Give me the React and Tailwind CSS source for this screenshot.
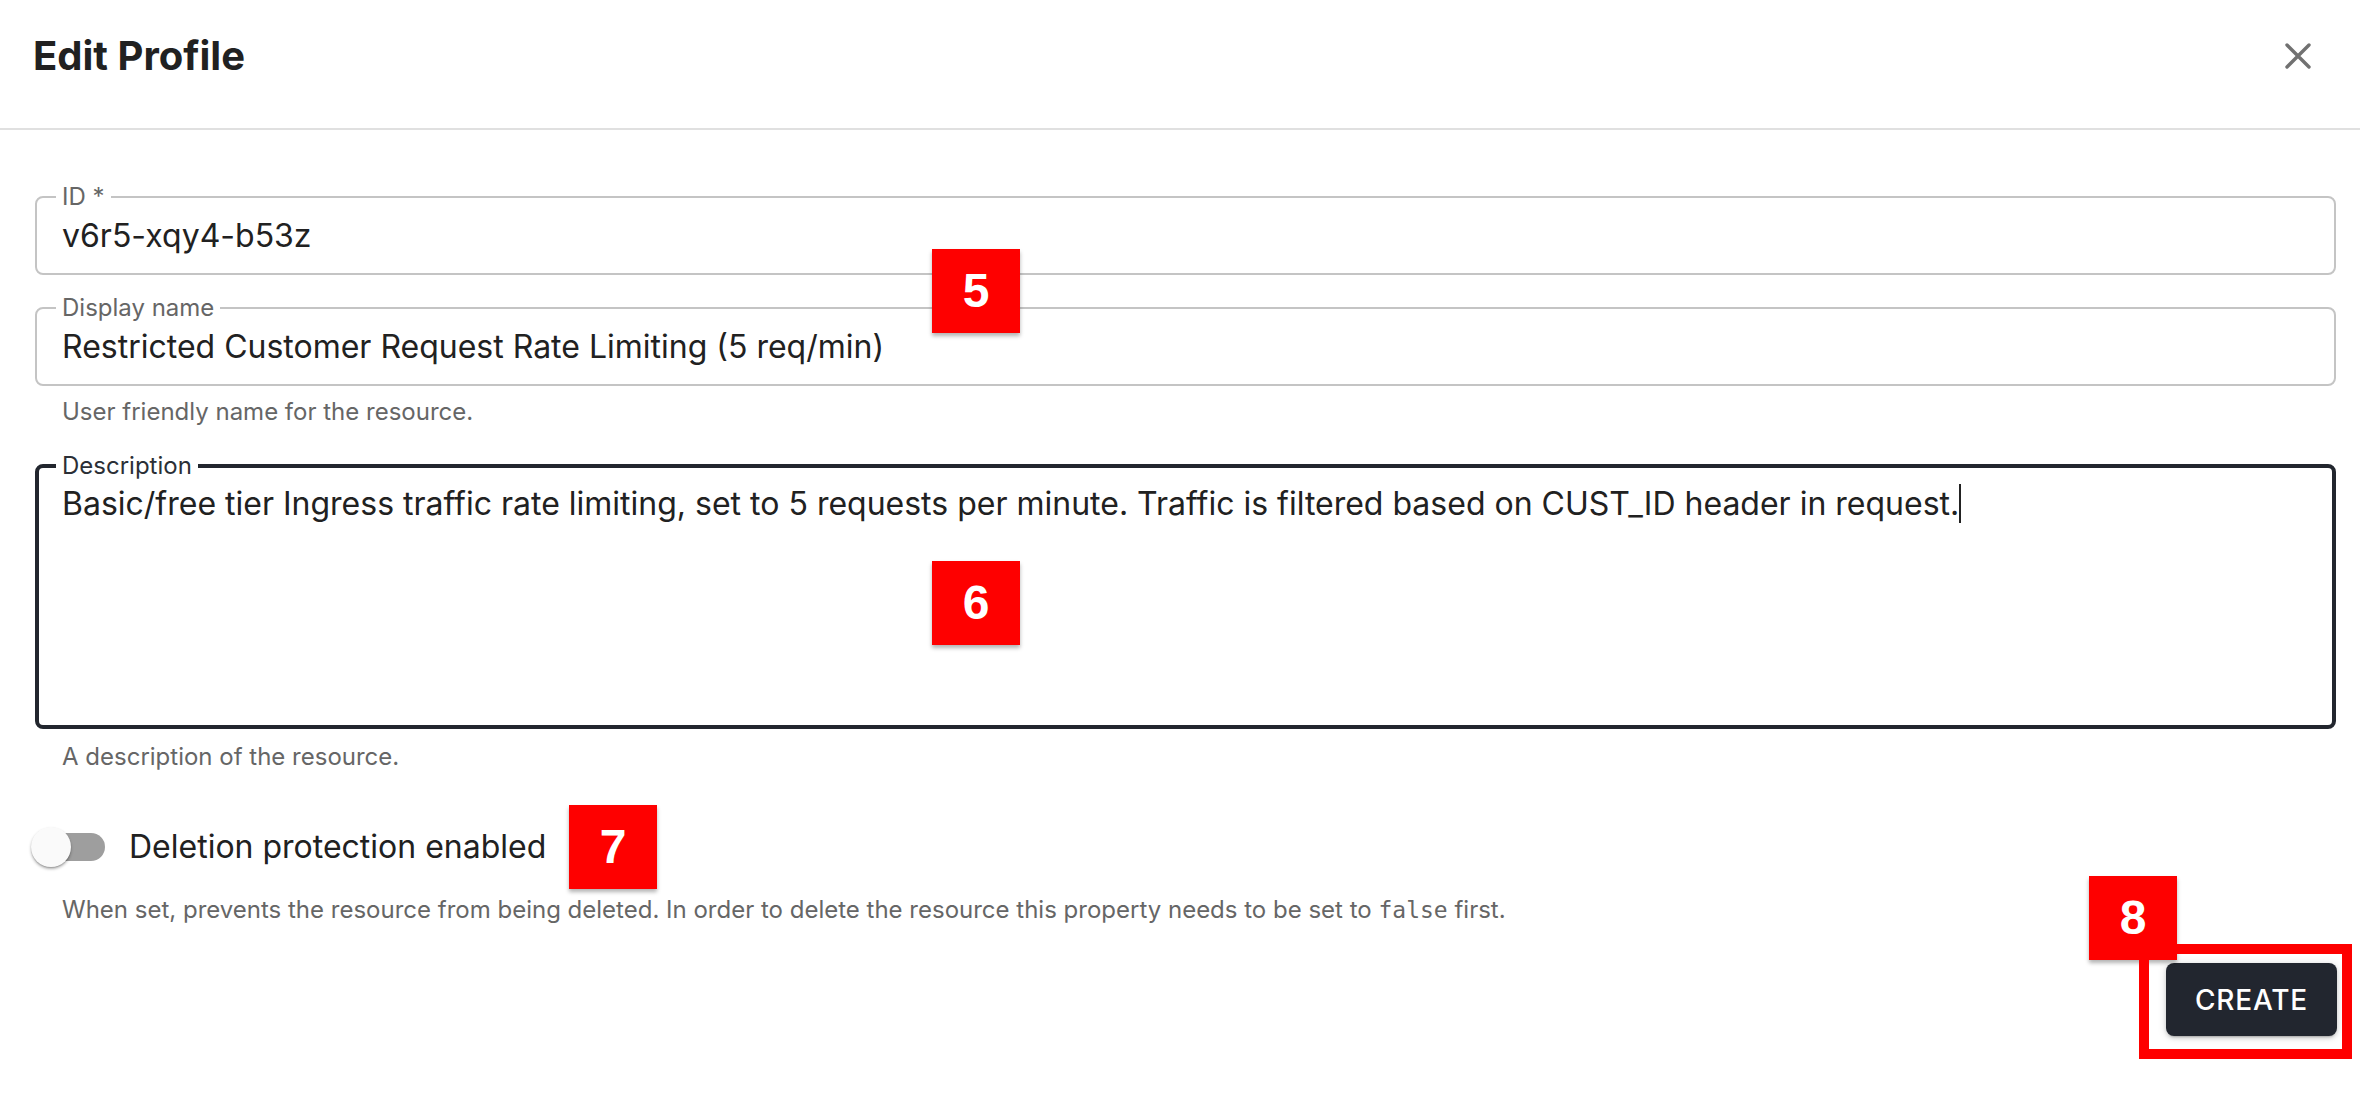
import React from 'react';

// red numbered marker laid over the form
function Marker({ n, className }) {
  return (
    <div
      className={`absolute w-[88px] h-[84px] bg-[#fe0000] text-white flex items-center justify-center font-['Liberation_Sans',Arial,sans-serif] font-bold text-[48px] shadow-[0_3px_4px_rgba(0,0,0,0.3)] ${className}`}
    >
      {n}
    </div>
  );
}

function OutlinedField({ label, value, focused }) {
  return (
    <fieldset
      className={`rounded-lg ${
        focused ? 'border-4 border-[#22262e] px-[17px]' : 'border-2 border-[#c4c4c4] px-[19px]'
      }`}
    >
      <legend
        className={`px-[6px] text-[24px] leading-[24px] ${focused ? 'text-[#2b2f36]' : 'text-[#666666]'}`}
      >
        {label}
      </legend>
      {value}
    </fieldset>
  );
}

export default function App() {
  return (
    <div className="relative min-h-screen bg-white font-['Inter','Noto_Sans',sans-serif] text-[#212121] overflow-hidden">
      {/* Header */}
      <div className="h-[130px] border-b-2 border-[#e0e0e0] flex items-start justify-between px-[33px] pt-[32px]">
        <h2 className="text-[40px] leading-[48px] font-bold text-[#212121]">Edit Profile</h2>
        <div className="h-[48px] flex items-center mr-[16px]">
          <svg width="26" height="26" viewBox="0 0 26 26" fill="none">
            <path d="M2 2 24 24 M24 2 2 24" stroke="#717171" strokeWidth="3.4" strokeLinecap="round" />
          </svg>
        </div>
      </div>

      {/* Form */}
      <div className="pl-[35px] pr-[24px] pt-[55px] flex flex-col">
        <OutlinedField
          label="ID *"
          value={<div className="pl-[6px] pt-[4px] pb-[14px] text-[32px] leading-[46px]">v6r5-xqy4-b53z</div>}
        />

        <div className="mt-[21px]">
          <OutlinedField
            label="Display name"
            value={
              <div className="pl-[6px] pt-[4px] pb-[14px] text-[32px] leading-[46px]">
                Restricted Customer Request Rate Limiting (5 req/min)
              </div>
            }
          />
        </div>
        <p className="pl-[27px] mt-[6px] text-[24px] leading-[40px] text-[#666666]">User friendly name for the resource.</p>

        <div className="mt-[22px]">
          <OutlinedField
            focused
            label="Description"
            value={
              <div className="pl-[6px] pt-[3px] h-[247px] text-[32px] leading-[46px]">
                Basic/free tier Ingress traffic rate limiting, set to 5 requests per minute. Traffic is filtered based on
                CUST_ID header in request.
                <span className="inline-block w-[2px] h-[39px] bg-[#222] align-[-8px]" />
              </div>
            }
          />
        </div>
        <p className="pl-[27px] mt-[8px] text-[24px] leading-[40px] text-[#666666]">A description of the resource.</p>

        {/* Switch */}
        <div className="mt-[32px] -ml-[22px] flex items-center h-[76px]">
          <div className="relative w-[116px] h-[76px] shrink-0">
            <div className="absolute left-[24px] top-[24px] w-[68px] h-[28px] rounded-full bg-[#9e9e9e]" />
            <div className="absolute left-[18px] top-[18px] w-[40px] h-[40px] rounded-full bg-[#fafafa] shadow-[0_2px_3px_rgba(0,0,0,0.3),0_1px_1px_rgba(0,0,0,0.14)]" />
          </div>
          <span className="text-[32px] leading-[46px] text-[#212121]">Deletion protection enabled</span>
        </div>
        <p className="pl-[27px] mt-[5px] text-[24px] leading-[40px] text-[#666666]">
          When set, prevents the resource from being deleted. In order to delete the resource this property needs to be
          set to <code className="font-['DejaVu_Sans_Mono','Liberation_Mono',monospace] text-[23px]">false</code> first.
        </p>

        <div className="mt-[33px] flex justify-end -mr-[1px]">
          <button className="h-[73px] px-[29px] rounded-lg bg-[#22262f] text-white text-[28px] font-medium tracking-[0.8px] shadow-[0_3px_2px_-2px_rgba(0,0,0,0.2),0_2px_4px_rgba(0,0,0,0.14),0_1px_10px_rgba(0,0,0,0.12)]">
            CREATE
          </button>
        </div>
      </div>

      {/* Annotations */}
      <Marker n="5" className="left-[932px] top-[249px]" />
      <Marker n="6" className="left-[932px] top-[561px]" />
      <Marker n="7" className="left-[569px] top-[805px]" />
      <Marker n="8" className="left-[2089px] top-[876px]" />
      <div className="absolute left-[2139px] top-[944px] w-[213px] h-[115px] border-[10px] border-[#fe0000]" />
    </div>
  );
}
